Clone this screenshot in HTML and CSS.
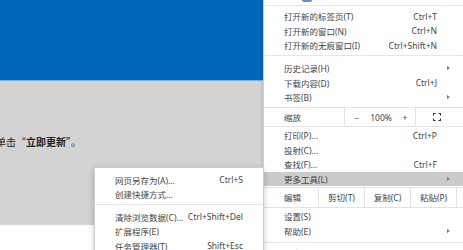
FILE: index.html
```html
<!DOCTYPE html>
<html lang="zh-CN">
<head>
    <meta charset="UTF-8">
    <meta name="viewport" content="width=device-width, initial-scale=1.0">
    <title>更多工具</title>
    <link rel="stylesheet" href="styles.css">
</head>
<body>
    <div class="page">
        <div class="hero"></div>
        <div class="dim">
            <p class="notice">单击“<b>立即更新</b>”。</p>
        </div>
    </div>

    <div class="menu main-menu">
        <div class="cut-row"><span class="badge"></span></div>
        <div class="sep sep-first"></div>

        <div class="item"><span class="label">打开新的标签页(T)</span><span class="key">Ctrl+T</span><span class="tail"></span></div>
        <div class="item"><span class="label">打开新的窗口(N)</span><span class="key">Ctrl+N</span><span class="tail"></span></div>
        <div class="item"><span class="label">打开新的无痕窗口(I)</span><span class="key">Ctrl+Shift+N</span><span class="tail"></span></div>

        <div class="sep sep-mid"></div>

        <div class="item"><span class="label">历史记录(H)</span><span class="tail"><i class="arrow"></i></span></div>
        <div class="item"><span class="label">下载内容(D)</span><span class="key">Ctrl+J</span><span class="tail"></span></div>
        <div class="item"><span class="label">书签(B)</span><span class="tail"><i class="arrow"></i></span></div>

        <div class="zoom-row">
            <span class="row-label">缩放</span>
            <div class="zoom-ctrl">
                <span>−</span>
                <span>100%</span>
                <span>+</span>
            </div>
            <div class="full-btn">
                <svg width="8" height="8" viewBox="0 0 8 8" fill="none" stroke="#333" stroke-width="1.1">
                    <path d="M0.5 2.6V0.5H2.6M5.4 0.5H7.5V2.6M7.5 5.4V7.5H5.4M2.6 7.5H0.5V5.4"/>
                </svg>
            </div>
        </div>

        <div class="group-after-zoom">
            <div class="item"><span class="label">打印(P)...</span><span class="key">Ctrl+P</span><span class="tail"></span></div>
            <div class="item"><span class="label">投射(C)...</span><span class="tail"></span></div>
            <div class="item"><span class="label">查找(F)...</span><span class="key">Ctrl+F</span><span class="tail"></span></div>
            <div class="item active"><span class="label">更多工具(L)</span><span class="tail"><i class="arrow"></i></span></div>
        </div>

        <div class="edit-row">
            <span class="row-label">编辑</span>
            <span class="edit-btn">剪切(T)</span>
            <span class="edit-btn">复制(C)</span>
            <span class="edit-btn">粘贴(P)</span>
        </div>

        <div class="group-after-edit">
            <div class="item"><span class="label">设置(S)</span><span class="tail"></span></div>
            <div class="item"><span class="label">帮助(E)</span><span class="tail"><i class="arrow"></i></span></div>
        </div>

        <div class="sep sep-last"></div>
        <div class="item"><span class="label">退出(X)</span><span class="tail"></span></div>
    </div>

    <div class="menu sub-menu">
        <div class="item"><span class="label">网页另存为(A)...</span><span class="key">Ctrl+S</span></div>
        <div class="item"><span class="label">创建快捷方式...</span></div>
        <div class="sep sep-sub"></div>
        <div class="item"><span class="label">清除浏览数据(C)...</span><span class="key">Ctrl+Shift+Del</span></div>
        <div class="item"><span class="label">扩展程序(E)</span></div>
        <div class="item"><span class="label">任务管理器(T)</span><span class="key">Shift+Esc</span></div>
    </div>
</body>
</html>
```

FILE: styles.css
```css
body {
    margin: 0;
    width: 463px;
    height: 250px;
    overflow: hidden;
    position: relative;
    background: #fff;
    font-family: "Noto Sans", "Noto Sans CJK SC", sans-serif;
    color: #333;
}

.hero {
    height: 80px;
    background: #0067b8;
    border-bottom: 1px solid #8aaed2;
}
.dim {
    height: 144px;
    background: #d3d3d3;
    overflow: hidden;
}
.notice {
    margin: 54px 0 0 -4px;
    font-family: "Noto Sans CJK SC", sans-serif;
    font-size: 10px;
    line-height: 14px;
    color: #222;
    white-space: nowrap;
}
.notice b {
    font-weight: 700;
}

/* menus */
.menu {
    position: absolute;
    background: #fff;
    font-size: 8.5px;
    color: #454545;
}
.main-menu {
    left: 263px;
    top: -10px;
    width: 200px;
    border-left: 1px solid #cfcfcf;
    box-shadow: -1px 0 3px rgba(0, 0, 0, 0.12);
}
.sub-menu {
    left: 94px;
    top: 167px;
    width: 170px;
    box-sizing: border-box;
    border: 1px solid #cdcdcd;
    padding-top: 4.5px;
    box-shadow: 0 2px 6px rgba(0, 0, 0, 0.22);
    z-index: 2;
}

.item {
    display: flex;
    align-items: center;
    height: 14.5px;
    padding-left: 20px;
    white-space: nowrap;
}
.item .label {
    flex: 1;
}
.sub-menu .item {
    padding-right: 20px;
}
.item .tail {
    width: 27px;
    display: flex;
    align-items: center;
}
.item.active {
    background: #cbcbcb;
}
.arrow {
    margin-left: 10px;
    width: 0;
    height: 0;
    border-top: 2.5px solid transparent;
    border-bottom: 2.5px solid transparent;
    border-left: 3px solid #7a7a7a;
}

.cut-row {
    height: 14px;
    display: flex;
    align-items: flex-end;
    padding-bottom: 2px;
    box-sizing: border-box;
}
.badge {
    margin-left: 38px;
    width: 10px;
    height: 10px;
    border-radius: 2px;
    background: #5f8fd4;
}

.sep {
    height: 1px;
    background: #e6e6e6;
}
.sep-first {
    margin: 1px 0 3px;
}
.sep-mid {
    margin: 2.5px 0 5px;
}
.sep-last {
    margin: 3.5px 0 3px;
}
.sep-sub {
    margin: 2px 0 5px;
}

.zoom-row,
.edit-row {
    display: flex;
    align-items: stretch;
    border-top: 1px solid #e3e3e3;
    border-bottom: 1px solid #e3e3e3;
    white-space: nowrap;
}
.zoom-row {
    height: 18px;
    margin-top: 2.5px;
}
.row-label {
    display: flex;
    align-items: center;
    padding-left: 20px;
}
.zoom-row .row-label {
    width: 60px;
}
.zoom-ctrl {
    display: grid;
    grid-template-columns: repeat(3, 24px);
    align-items: center;
    justify-items: center;
    width: 70px;
    border-left: 1px solid #e3e3e3;
    border-right: 1px solid #e3e3e3;
}
.full-btn {
    display: flex;
    align-items: center;
    padding-left: 17px;
}

.group-after-zoom {
    padding-top: 1px;
}

.edit-row {
    height: 19px;
    margin-top: 0.5px;
}
.edit-row .row-label {
    width: 34px;
}
.edit-btn {
    width: 45px;
    display: flex;
    align-items: center;
    justify-content: center;
    border-left: 1px solid #e3e3e3;
}
.edit-btn:last-child {
    border-right: 1px solid #e3e3e3;
}

.group-after-edit {
    padding-top: 1.5px;
}
```
